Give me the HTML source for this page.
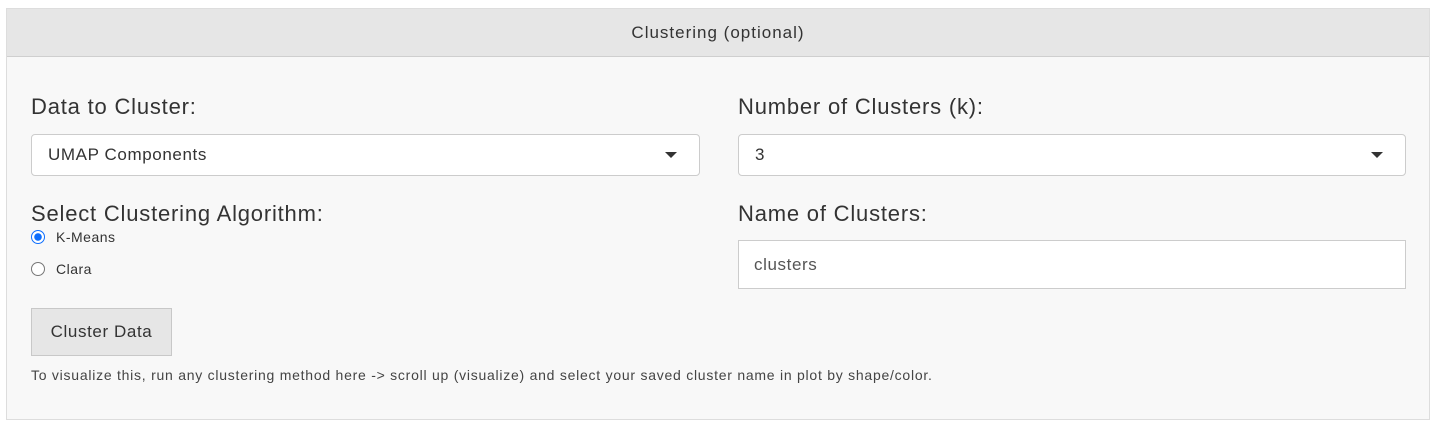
<!DOCTYPE html>
<html><head><style>
body{margin:0;background:#fff;font-family:"Liberation Sans",sans-serif;color:#333;}
.panel{position:absolute;left:6px;top:8px;width:1424px;height:412px;border:1px solid #ddd;background:#f8f8f8;box-sizing:border-box;}
.hdr{position:absolute;left:0;top:0;right:0;height:47px;background:#e6e6e6;border-bottom:1px solid #cfcfcf;text-align:center;line-height:47px;font-size:17px;color:#333;letter-spacing:1px;}
.lbl{position:absolute;font-size:22px;color:#333;letter-spacing:0.8px;}
.sel{position:absolute;height:42px;border:1px solid #ccc;border-radius:4px;background:#fff;box-sizing:border-box;font-size:17px;line-height:40px;padding-left:16px;color:#333;letter-spacing:0.6px;}
.sel:after{content:"";position:absolute;right:22px;top:17px;border-left:6px solid transparent;border-right:6px solid transparent;border-top:6px solid #333;}
.inp{position:absolute;height:49px;border:1px solid #ccc;background:#fff;box-sizing:border-box;font-size:17px;line-height:47px;padding-left:15px;color:#555;letter-spacing:0.6px;}
.radio{position:absolute;font-size:14px;color:#333;letter-spacing:0.5px;}
.rc{position:absolute;left:0;width:12px;height:12px;border:1px solid #777;border-radius:50%;background:#fff;}
.btn{position:absolute;left:31px;top:308px;width:141px;height:48px;border:1px solid #c8c8c8;background:#e6e6e6;box-sizing:border-box;font-size:17px;line-height:46px;text-align:center;color:#333;letter-spacing:0.6px;}
.help{position:absolute;left:31px;top:367px;font-size:14px;color:#444;letter-spacing:0.75px;white-space:nowrap;}
</style></head><body>
<div class="panel"><div class="hdr">Clustering (optional)</div></div>
<div class="lbl" style="left:31px;top:94px">Data to Cluster:</div>
<div class="sel" style="left:31px;top:134px;width:669px">UMAP Components</div>
<div class="lbl" style="left:738px;top:94px">Number of Clusters (k):</div>
<div class="sel" style="left:738px;top:134px;width:668px">3</div>
<div class="lbl" style="left:31px;top:201px">Select Clustering Algorithm:</div>
<div class="radio" style="left:31px;top:229px;height:16px"><div class="rc" style="top:1px;border:1px solid #0d6efd;background:radial-gradient(circle,#0d6efd 0 3.5px,#fff 4px)"></div><span style="position:absolute;left:25px;top:0;white-space:nowrap">K-Means</span></div>
<div class="radio" style="left:31px;top:261px;height:16px"><div class="rc" style="top:1px"></div><span style="position:absolute;left:25px;top:0">Clara</span></div>
<div class="lbl" style="left:738px;top:201px">Name of Clusters:</div>
<div class="inp" style="left:738px;top:240px;width:668px">clusters</div>
<div class="btn">Cluster Data</div>
<div class="help">To visualize this, run any clustering method here -&gt; scroll up (visualize) and select your saved cluster name in plot by shape/color.</div>
</body></html>
